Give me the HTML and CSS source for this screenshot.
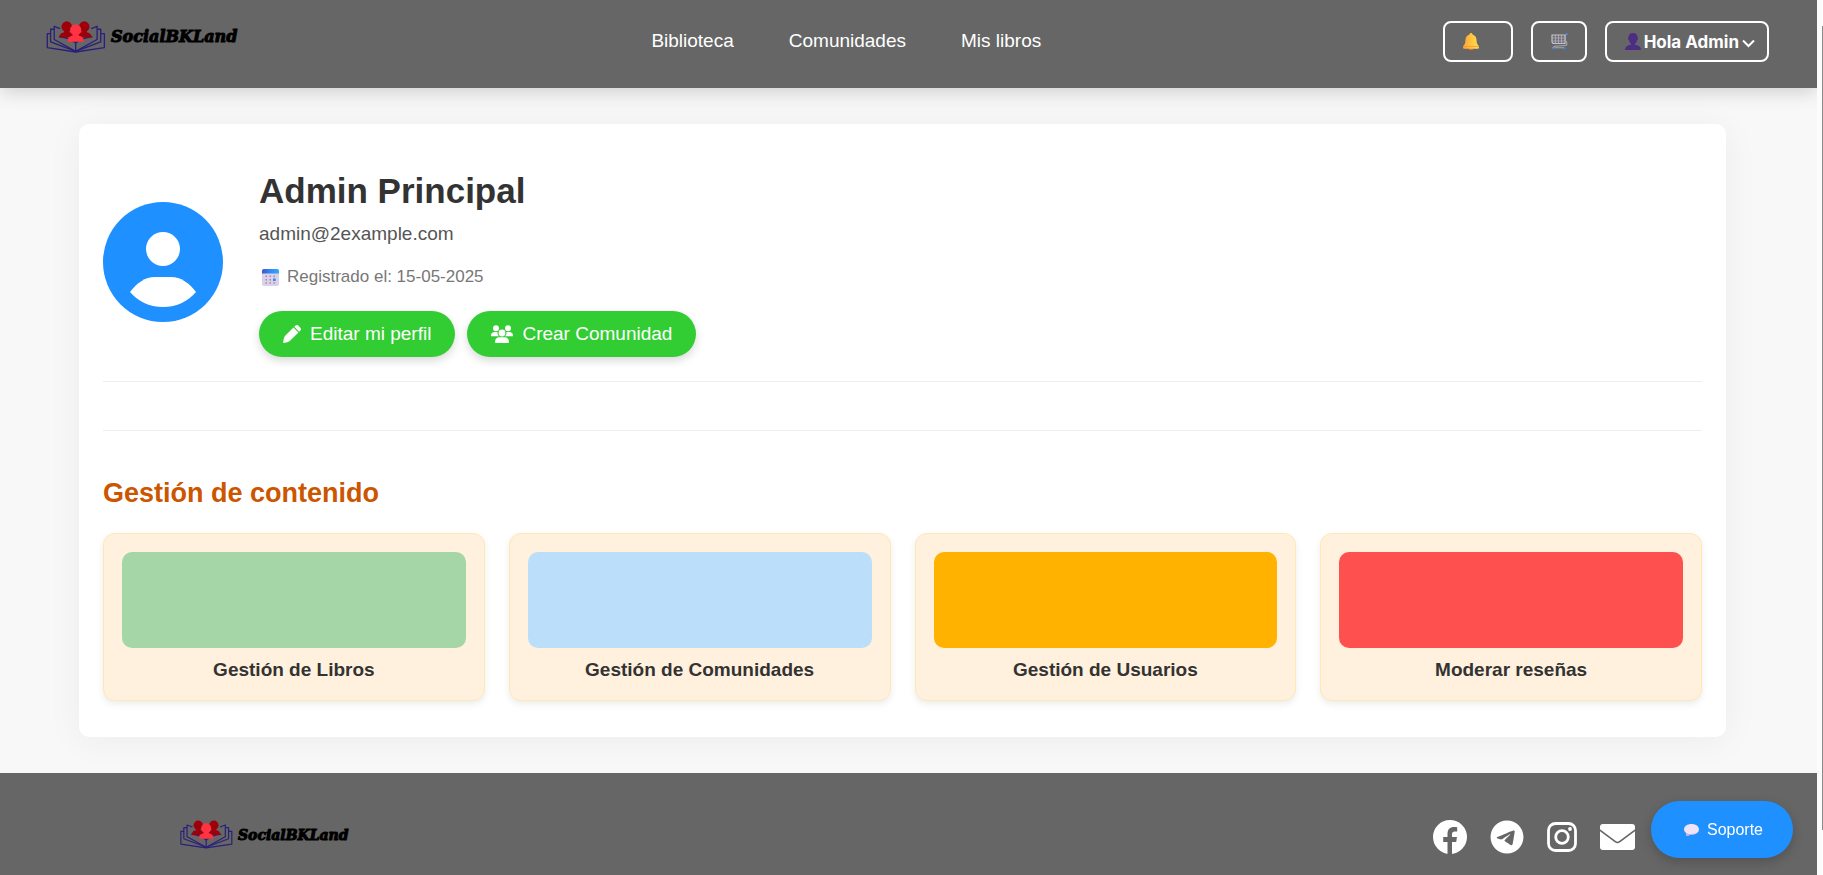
FILE: index.html
```html
<!DOCTYPE html>
<html lang="es">
<head>
<meta charset="utf-8">
<title>SocialBKLand</title>
<link rel="stylesheet" href="styles.css">
</head>
<body>
<svg class="defs" aria-hidden="true">
  <symbol id="book" viewBox="50 61 180 97">
    <g fill="none" stroke="#29207a" stroke-width="4" stroke-linejoin="round">
      <path d="M92 84 74 77V117L139 153 204 117V77L186 84"/>
      <path d="M74 86H63V124L139 153 215 124V86H204"/>
      <path d="M63 99H53V142L139 155 226 142V99H215"/>
      <path d="M139 122V154"/>
      <path d="M88 108Q122 112 139 128Q156 112 190 108"/>
    </g>
    <g fill="#9d000b">
      <circle cx="112" cy="78" r="16"/>
      <path d="M104 88h16v7c10 2 14 7 14 16H90c0-9 4-14 14-16z"/>
      <circle cx="165" cy="78" r="16"/>
      <path d="M157 88h16v7c10 2 14 7 14 16h-44c0-9 4-14 14-16z"/>
    </g>
    <circle cx="139" cy="88" r="17" fill="#ff3341"/>
    <path d="M130 98h18v7c11 2 16 8 16 19h-50c0-11 5-17 16-19z" fill="#ff3341"/>
  </symbol>
</svg>

<header class="topbar">
  <a class="logo" href="#"><svg class="logo-mark" aria-hidden="true"><use href="#book"/></svg><span>SocialBKLand</span></a>
  <nav class="menu">
    <a href="#">Biblioteca</a>
    <a href="#">Comunidades</a>
    <a href="#">Mis libros</a>
  </nav>
  <div class="actions">
    <button class="outline bell" type="button" aria-label="Notificaciones">
      <svg width="16" height="18" viewBox="0 0 16 18"><defs><linearGradient id="gold" x1="0" x2="1"><stop stop-color="#ff9f3c"/><stop offset=".55" stop-color="#ffc83d"/><stop offset="1" stop-color="#ffd95a"/></linearGradient></defs><ellipse cx="8" cy="15.5" rx="2.6" ry="1.8" fill="#e0713c"/><path d="M8 0c1 0 1.500.6 1.500 1.500C12.500 2.300 13.500 5 13.600 7.500c.1 2.500.6 3.800 1.800 5 .8 1 .7 3.300-.6 3.300H1.200C-.1 15.800-.2 13.500.6 12.500c1.200-1.200 1.700-2.500 1.800-5C2.500 5 3.500 2.300 6.500 1.500 6.500.6 7 0 8 0z" fill="url(#gold)"/><path d="M.4 13.500h15.200" stroke="#f59a2f" stroke-width=".8"/></svg>
    </button>
    <button class="outline cart" type="button" aria-label="Carrito">
      <svg width="17" height="17" viewBox="0 0 17 17" fill="none"><path d="M1 2h13v8.500H3Q1 10.500 1 8z" fill="#716e76" stroke="#c4c1ca" stroke-width="1.200"/><path d="M4.500 2v8M7.500 2v8M10.500 2v8M1.500 5h12M1.500 8h12" stroke="#b9b6c0" stroke-width=".7"/><path d="M16.200 1 14.500 2v6c2 .5 2 4.300-.3 4.500L3.500 13.200 2 14.800h12" stroke="#aaa7b1" stroke-width="1.100"/><path d="M15 1.500 17 .8" stroke="#3b87f0" stroke-width="1.500"/><circle cx="3" cy="15.500" r="1.200" fill="#3b7fe8"/><circle cx="13.500" cy="15.500" r="1.200" fill="#3b7fe8"/></svg>
    </button>
    <button class="outline user" type="button">
      <svg width="16" height="17" viewBox="0 0 16 17"><path d="M8 0c-3 0-4.500 1.700-4.500 4 0 .6-.5.800-.5 1.600C3 6.500 3.600 7 4 7.200c.3 1.700 1 2.800 2 3.500v1C2.500 12.300.3 13.500 0 17h16c-.3-3.500-2.500-4.700-6-5.300v-1c1-.7 1.700-1.800 2-3.500.4-.2 1-.7 1-1.600 0-.8-.5-1-.5-1.600C12.500 1.700 11 0 8 0z" fill="#4d2d84"/></svg>
      <span>Hola Admin</span>
      <svg class="chevron" width="13" height="9" viewBox="0 0 13 9"><path d="M1 1.500 6.500 7 12 1.500" fill="none" stroke="#fff" stroke-width="2"/></svg>
    </button>
  </div>
</header>

<main class="panel">
  <section class="profile">
    <svg class="avatar" viewBox="0 0 120 120" role="img" aria-label="Avatar"><circle cx="60" cy="60" r="60" fill="#1e90ff"/><circle cx="60" cy="47" r="17" fill="#fff"/><path d="M27 90c7-9 15-15 25-15h16c10 0 18 6 25 15-8 9-19 15-33 15s-25-6-33-15z" fill="#fff"/></svg>
    <div class="info">
      <h1>Admin Principal</h1>
      <p class="email">admin@2example.com</p>
      <p class="since">
        <svg width="17" height="17" viewBox="0 0 17 17"><defs><linearGradient id="sky" x1="0" x2="1"><stop stop-color="#3b55d6"/><stop offset=".5" stop-color="#2f8cf5"/><stop offset="1" stop-color="#34a7ff"/></linearGradient></defs><rect width="17" height="17" rx="2" fill="#dcd0ea"/><path d="M2 0h13a2 2 0 0 1 2 2v2.500H0V2a2 2 0 0 1 2-2z" fill="url(#sky)"/><g fill="#9a8fab"><path d="M3.500 6.500H5V8H3.500zM7.500 6.500H9V8H7.500zM11.500 6.500H13V8h-1.500zM3.500 10H5v1.500H3.500zM7.500 10H9v1.500H7.500zM3.500 13.300H5v1.500H3.500zM7.500 13.300H9v1.500H7.500zM11.500 13.300H13v1.500h-1.500z"/></g><path d="M11 9.500h2.700V12H11z" fill="#2f8cf5"/></svg>
        Registrado el: 15-05-2025
      </p>
      <div class="buttons">
        <button class="pill" type="button">
          <svg width="18" height="18" viewBox="0 0 18 18" fill="#fff"><path d="M10.500 2.500 15.500 7.500 6.500 16.300Q3.500 18 .3 18 0 17.700.2 17 .4 14 1.700 11.300z"/><path d="M11.300 1.700 12.500.6c.8-.8 2-.8 2.800 0l2.100 2.100c.8.800.8 2 0 2.800L16.300 6.700z"/></svg>
          Editar mi perfil
        </button>
        <button class="pill" type="button">
          <svg width="22" height="18" viewBox="0 0 22 18" fill="#fff"><circle cx="5" cy="3.200" r="3"/><circle cx="17" cy="3.200" r="3"/><path d="M0 11c0-3 1.500-4 3.500-4h3C6.300 9 7 10 8 11.300H.6C.2 11.300 0 11.200 0 11zM22 11c0-3-1.500-4-3.500-4h-3c.2 2-.5 3-1.500 4.300h7.400c.4 0 .6-.1.600-.3z"/><circle cx="11" cy="8" r="3.400"/><path d="M4 17.300c0-3.600 2-5 4.500-5h5c2.500 0 4.500 1.400 4.500 5 0 .4-.3.700-.7.700H4.700c-.4 0-.7-.3-.7-.7z"/></svg>
          Crear Comunidad
        </button>
      </div>
    </div>
  </section>
  <div class="spacer"></div>
  <section class="manage">
    <h2>Gestión de contenido</h2>
    <div class="tiles">
      <a class="tile" href="#"><div class="swatch green"></div><h3>Gestión de Libros</h3></a>
      <a class="tile" href="#"><div class="swatch blue"></div><h3>Gestión de Comunidades</h3></a>
      <a class="tile" href="#"><div class="swatch amber"></div><h3>Gestión de Usuarios</h3></a>
      <a class="tile" href="#"><div class="swatch red"></div><h3>Moderar reseñas</h3></a>
    </div>
  </section>
</main>

<footer class="footer">
  <a class="logo small" href="#"><svg class="logo-mark" aria-hidden="true"><use href="#book"/></svg><span>SocialBKLand</span></a>
  <div class="social">
    <a href="#" aria-label="Facebook"><svg width="34" height="34" viewBox="0 0 34 34"><circle cx="17" cy="17" r="17" fill="#fff"/><path d="M14.500 34V22H10.200V17h4.300v-3c0-4.600 2.400-7 6.500-7 1.300 0 2.500.1 3.200.3v4.100h-2.300c-2.200 0-2.900 1.100-2.900 2.900V17h5l-.8 5H19v12z" fill="#666"/></svg></a>
    <a href="#" aria-label="Telegram"><svg width="34" height="34" viewBox="0 0 496 512" fill="#fff"><path d="M248 8C111 8 0 119 0 256s111 248 248 248 248-111 248-248S385 8 248 8zm115 168.700c-3.700 39.200-19.900 134.400-28.100 178.300-3.500 18.600-10.300 24.800-16.900 25.400-14.400 1.300-25.300-9.500-39.300-18.700-21.800-14.300-34.200-23.200-55.300-37.200-24.500-16.100-8.600-25 5.300-39.500 3.700-3.800 67.100-61.500 68.300-66.700.2-.7.300-3.100-1.200-4.400s-3.600-.8-5.100-.5q-3.300.7-104.600 69.100-14.800 10.200-26.900 9.900c-8.900-.2-25.900-5-38.600-9.100-15.500-5-27.900-7.700-26.800-16.300q.8-6.700 18.500-13.700 108.400-47.200 144.600-62.300c68.900-28.600 83.200-33.600 92.500-33.800 2.100 0 6.600.5 9.600 2.900a10.500 10.500 0 0 1 3.500 6.700 43.800 43.800 0 0 1 .5 9.900z"/></svg></a>
    <a href="#" aria-label="Instagram"><svg width="30" height="30" viewBox="0 0 30 30"><rect x="1.500" y="1.500" width="27" height="27" rx="7" fill="none" stroke="#fff" stroke-width="2.800"/><circle cx="15" cy="15" r="6.300" fill="none" stroke="#fff" stroke-width="2.800"/><circle cx="23" cy="7" r="1.900" fill="#fff"/></svg></a>
    <a href="#" aria-label="Correo"><svg width="35" height="26" viewBox="0 0 35 26"><rect width="35" height="26" rx="3" fill="#fff"/><path d="M-1 5.500 15.300 17.600a3.600 3.600 0 0 0 4.400 0L36 5.500" fill="none" stroke="#666" stroke-width="1.600"/></svg></a>
  </div>
</footer>

<button class="support" type="button">
  <svg width="15" height="12" viewBox="0 0 15 12"><path d="M7.500 0C3.400 0 0 2.200 0 5.300c0 1.700 1 3.100 2.500 4C2.500 10.500 2 11.300 2.300 12c1.700 0 3-.6 4-1.500 5 .5 8.700-1.800 8.700-5.200C15 2.200 11.600 0 7.500 0z" fill="#efe4f5"/><path d="M2.500 9.300c3 1.500 7 1.200 10-1-1.500 1.700-4 2.400-6.200 2.200-1 .9-2.300 1.500-4 1.500-.3-.7.200-1.500.2-2.700z" fill="#cbaed6"/></svg>
  Soporte
</button>
<div class="rail" aria-hidden="true"><div class="thumb"></div></div>
</body>
</html>
```

FILE: styles.css
```css
* { box-sizing: border-box; margin: 0; }

body {
  display: flex;
  flex-direction: column;
  min-height: 100vh;
  padding-right: 6px;
  background: #f8f8f8;
  color: #333;
  font-family: "Liberation Sans", Arial, sans-serif;
  font-size: 19px;
  line-height: 24px;
}

a { color: inherit; text-decoration: none; }
button { font: inherit; cursor: pointer; }
svg { display: block; flex: none; }
.defs { position: absolute; width: 0; height: 0; }

.topbar {
  display: flex;
  justify-content: space-between;
  align-items: center;
  padding: 21px 48px 26px 46px;
  background: #666;
  box-shadow: 0 4px 18px rgba(0, 0, 0, 0.17);
}

.logo {
  display: flex;
  align-items: center;
  align-self: flex-start;
  gap: 5px;
  min-width: 204px;
  color: #000;
  font: italic bold 16px/30px "DejaVu Serif", serif;
  -webkit-text-stroke: 1px #000;
}
.logo-mark { width: 60px; height: 32px; }
.logo.small { min-width: 0; font-size: 14px; line-height: 26px; }
.small .logo-mark { width: 53px; height: 29px; }

.menu { display: flex; gap: 55px; padding-bottom: 2px; color: #fff; }

.actions { display: flex; gap: 18px; }
.outline {
  display: flex;
  align-items: center;
  height: 41px;
  padding: 0 18px;
  border: 2px solid #fff;
  border-radius: 8px;
  background: transparent;
  color: #fff;
}
.bell { width: 70px; }
.cart { width: 56px; }
.user { gap: 3px; padding: 0 12px 0 18px; font: bold 17px/24px Inter, sans-serif; }
.chevron { margin-top: 4px; }

.panel {
  margin: 36px 91px 36px 79px;
  padding: 24px 24px 36px;
  border-radius: 10px;
  background: #fff;
  box-shadow: 0 4px 36px rgba(0, 0, 0, 0.05);
}

.profile {
  display: flex;
  align-items: center;
  gap: 36px;
  padding: 19px 0 24px;
  border-bottom: 1px solid #eee;
}
.avatar { width: 120px; height: 120px; }
h1 { font-size: 35px; line-height: 48px; }
.email { margin-top: 7px; color: #555; }
.since {
  display: flex;
  align-items: center;
  gap: 8px;
  margin-top: 19px;
  padding-left: 3px;
  color: #777;
  font-size: 17px;
}
.buttons { display: flex; gap: 12px; margin-top: 22px; }
.pill {
  display: flex;
  align-items: center;
  gap: 9px;
  height: 46px;
  padding: 0 24px;
  border: 0;
  border-radius: 24px;
  background: #32cd32;
  color: #fff;
  box-shadow: 0 4px 8px rgba(0, 0, 0, 0.15);
}

.spacer { height: 49px; border-bottom: 1px solid #eee; }

.manage { padding-top: 44px; }
h2 { color: #c50; font-size: 27px; line-height: 36px; }
.tiles {
  display: grid;
  grid-template-columns: repeat(4, 1fr);
  gap: 24px;
  margin-top: 22px;
}
.tile {
  padding: 18px;
  border: 1px solid #ffe8b3;
  border-radius: 12px;
  background: #fff1de;
  box-shadow: 0 3px 7px rgba(0, 0, 0, 0.08);
  text-align: center;
}
.swatch { height: 96px; margin-bottom: 10px; border-radius: 10px; }
.green { background: #a5d6a7; }
.blue { background: #bbdefb; }
.amber { background: #ffb300; }
.red { background: #ff5050; }
h3 { font-size: 19px; line-height: 24px; }

.footer {
  display: flex;
  flex: 1;
  justify-content: space-between;
  align-items: flex-start;
  padding: 47px 182px 21px 180px;
  background: #666;
}
.social { display: flex; align-items: center; gap: 23px; }

.support {
  position: fixed;
  right: 30px;
  bottom: 17px;
  display: flex;
  align-items: center;
  gap: 8px;
  height: 57px;
  padding: 0 30px 0 33px;
  border: 0;
  border-radius: 29px;
  background: #1e90ff;
  color: #fff;
  font-size: 16px;
  box-shadow: 0 4px 12px rgba(0, 0, 0, 0.2);
}

.rail {
  position: fixed;
  top: 0;
  right: 0;
  bottom: 0;
  width: 6px;
  padding: 26px 0 45px 5px;
  background: #fcfcfc;
}
.thumb { height: 100%; background: #8a8a8a; }
```
